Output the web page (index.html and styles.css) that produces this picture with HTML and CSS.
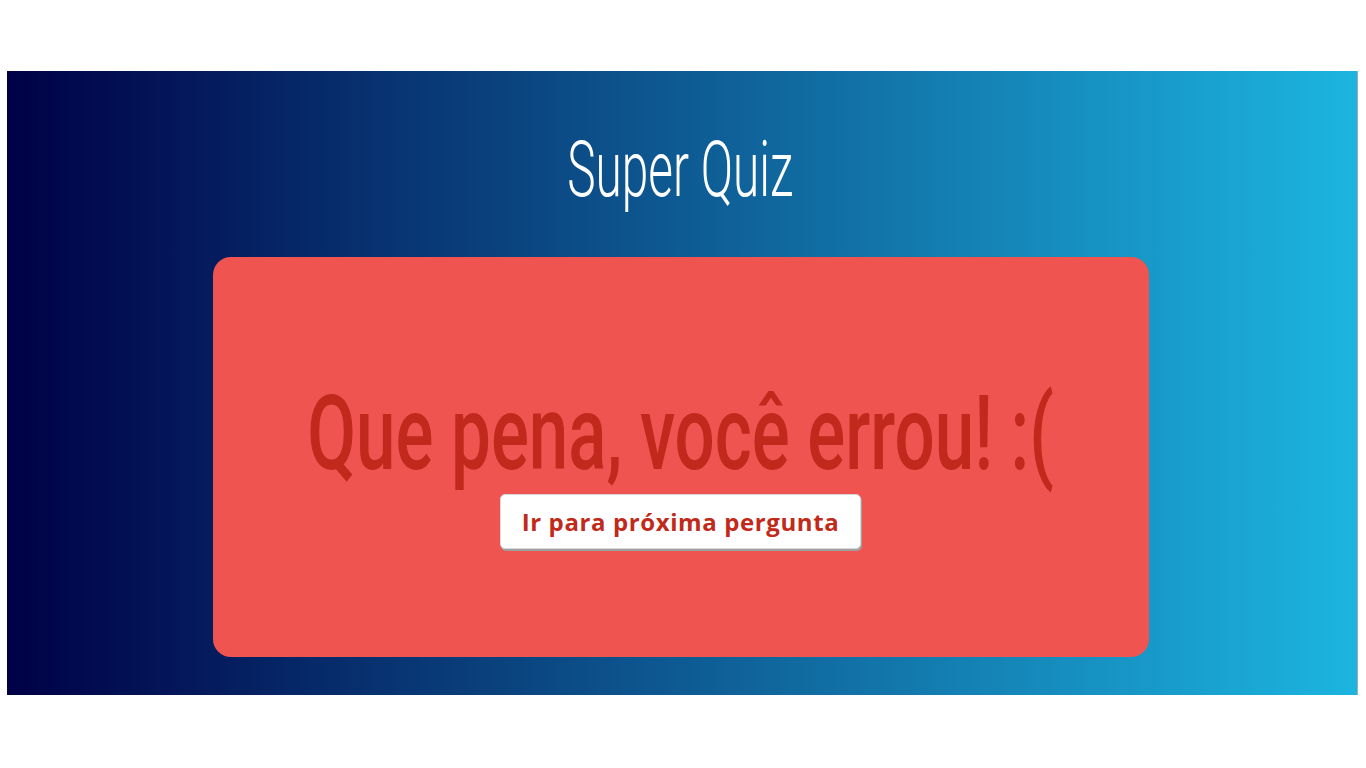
FILE: index.html
```html
<!DOCTYPE html>
<html lang="pt-BR">
<head>
<meta charset="utf-8">
<title>Super Quiz</title>
<link rel="stylesheet" href="styles.css">
</head>
<body>
<main class="panel">
  <header class="title-wrap">
    <h1 class="title"><span class="squeeze-title">Super Quiz</span></h1>
  </header>
  <section class="card">
    <h2 class="result"><span class="squeeze-result">Que pena, você errou! :(</span></h2>
    <button class="next-btn" type="button">Ir para próxima pergunta</button>
  </section>
</main>
</body>
</html>
```

FILE: styles.css
```css
html, body {
  margin: 0;
  padding: 0;
  background: #ffffff;
}

.panel {
  margin: 71px 8px 0 7px;
  height: 624px;
  box-sizing: border-box;
  padding-right: 3px;
  border-right: 1px solid #a9a9a9;
  background: linear-gradient(to right, #000046 0%, #1cb5e0 100%);
  display: flex;
  flex-direction: column;
  align-items: center;
}

.title-wrap {
  height: 186px;
  box-sizing: border-box;
  padding-top: 12px;
  display: flex;
  align-items: center;
  justify-content: center;
}

.title {
  margin: 0;
  font-family: Roboto, "Liberation Sans", sans-serif;
  font-weight: 300;
  font-size: 77px;
  line-height: 1;
  color: #ffffff;
  white-space: nowrap;
}

.squeeze-title {
  display: inline-block;
  transform: scaleX(0.62);
}

.card {
  width: 936px;
  height: 400px;
  box-sizing: border-box;
  padding-top: 12px;
  background: #f05451;
  border-radius: 18px;
  display: flex;
  flex-direction: column;
  align-items: center;
  justify-content: center;
}

.result {
  margin: 0;
  font-family: Roboto, "Liberation Sans", sans-serif;
  font-weight: 500;
  font-size: 103px;
  line-height: 1.1;
  color: #c0291b;
  white-space: nowrap;
}

.squeeze-result {
  display: inline-block;
  transform: scaleX(0.688);
}

.next-btn {
  margin-top: 4px;
  height: 55px;
  padding: 0 21px;
  background: #ffffff;
  border: 1px solid #d8d8d8;
  border-radius: 5px;
  box-shadow: 1px 2px 0 #a0a0a0;
  font-family: "Open Sans", "Liberation Sans", sans-serif;
  font-weight: 700;
  font-size: 24px;
  letter-spacing: 0.6px;
  color: #c12a1a;
  cursor: pointer;
}
```
